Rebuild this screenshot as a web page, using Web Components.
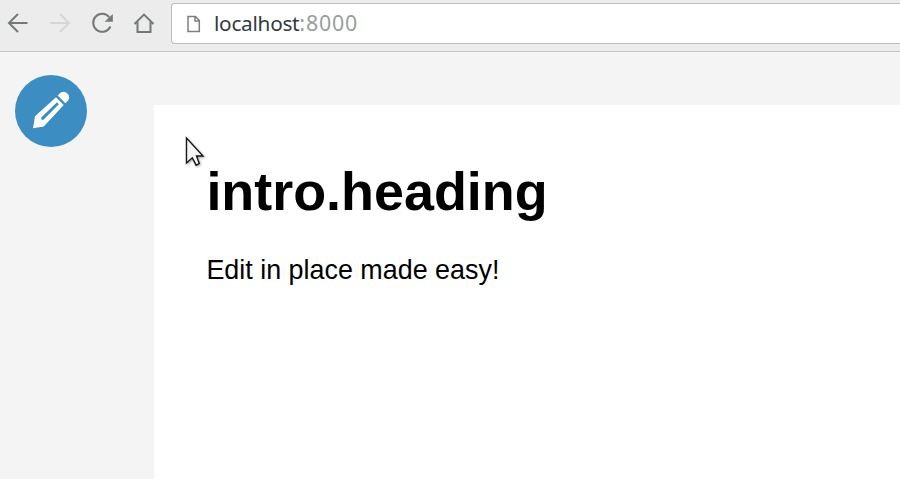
<!DOCTYPE html>
<html lang="en"><head><meta charset="utf-8"><title>localhost:8000</title>
<style>html,body{margin:0;height:100%;overflow:hidden;background:#f4f4f4}</style></head>
<body><demo-browser></demo-browser>
<script>
const define = (name, html) => customElements.define(name, class extends HTMLElement {
  constructor() {
    super();
    const t = document.createElement('template');
    t.innerHTML = html;
    this.attachShadow({mode: 'open'}).append(t.content.cloneNode(true));
  }
});

define('nav-icons', `<style>
:host{display:block;flex:none;width:170px;height:51px}svg{display:block}
</style><svg width="170" height="51" fill="none" stroke="#737879" stroke-width="2">
<path d="M27.5 23H9.5M18 14L9 23L18 32"/>
<path d="M50.5 23H68.5M60 14L69 23L60 32" stroke="#d5d6d6"/>
<path d="M109.2 17.2A9 9 0 1 0 110.4 26.5"/><path d="M112.8 14V21.8H104.6Z" fill="#737879" stroke="none"/>
<path d="M134.5 24L144 14.6L153.5 24M137.5 22V32H150.5V22"/></svg>`);

define('address-bar', `<style>
:host{display:flex;align-items:center;flex:1;box-sizing:border-box;height:41px;margin:3px 0 0 1px;border:1px solid #bdbdbd;border-right:0;border-radius:4px 0 0 4px;background:#fff;padding-left:15px;font:20.8px/28px "Noto Sans",sans-serif;color:#303a3d}
svg{display:block;margin-right:13px}.text{white-space:nowrap;letter-spacing:-.28px;padding-bottom:2px}.port{color:#999e9d;font-size:21.4px;letter-spacing:.8px}
</style><svg width="14" height="18" fill="none" stroke="#7b7f7f" stroke-width="1.5"><path d="M1 1.5H8.5L12.3 5.5V16.5H1ZM8 1.5V6H12.5"/></svg>
<span class="text"><slot></slot><span class="port"><slot name="port"></slot></span></span>`);

define('browser-toolbar', `<style>
:host{display:flex;align-items:flex-start;box-sizing:border-box;height:52px;background:#ececec;border-bottom:1px solid #c6c6c6}
</style><nav-icons></nav-icons><address-bar>localhost<span slot="port">:8000</span></address-bar>`);

define('edit-button', `<style>
:host{display:block;width:72px;height:72px;border-radius:50%;background:#3c8dc1}svg{display:block}
</style><svg width="72" height="72" fill="#fff">
<path fill-rule="evenodd" d="M41 22.2L48.7 30L28.7 51.5L18 53.3L20 41.2ZM42 27.3L26.3 42.6V44.7H28.5L43.8 29.2Z"/>
<path d="M42.7 20.4L45.5 17.7A5.6 5.6 0 0 1 53.2 25.4L50.3 28.3Z"/></svg>`);

define('content-page', `<style>
:host{display:block;flex:1;box-sizing:border-box;margin:53px 0 0 1px;padding:54px 0 0 52.4px;background:#fff;color:#000;font-family:"Liberation Sans",Arial,sans-serif}
h1{margin:0;font-size:53.9px;line-height:64px}p{margin:31px 0 0;font-size:26.9px;line-height:32px}
</style><h1><slot name="heading"></slot></h1><p><slot></slot></p>`);

define('mouse-pointer', `<style>
:host{position:absolute;left:185px;top:136px;width:22px;height:32px}svg{display:block;filter:drop-shadow(1px 1px 1px #0005)}
</style><svg width="22" height="32"><path d="M1.5 2V27L7.3 21.8L11.2 29.2L14.3 27.5L11.5 20H18Z" fill="#f6f6f4" stroke="#171717" stroke-width="1.4"/></svg>`);

define('demo-browser', `<style>
:host{display:flex;flex-direction:column;height:479px;position:relative;overflow:hidden;background:#f4f4f4}
main{display:flex;flex:1;min-height:0}aside{width:153px;flex:none;box-sizing:border-box;padding:23.4px 0 0 15px}
</style><browser-toolbar></browser-toolbar><main><aside><edit-button></edit-button></aside>
<content-page><span slot="heading">intro.heading</span>Edit in place made easy!</content-page></main><mouse-pointer></mouse-pointer>`);
</script></body></html>
